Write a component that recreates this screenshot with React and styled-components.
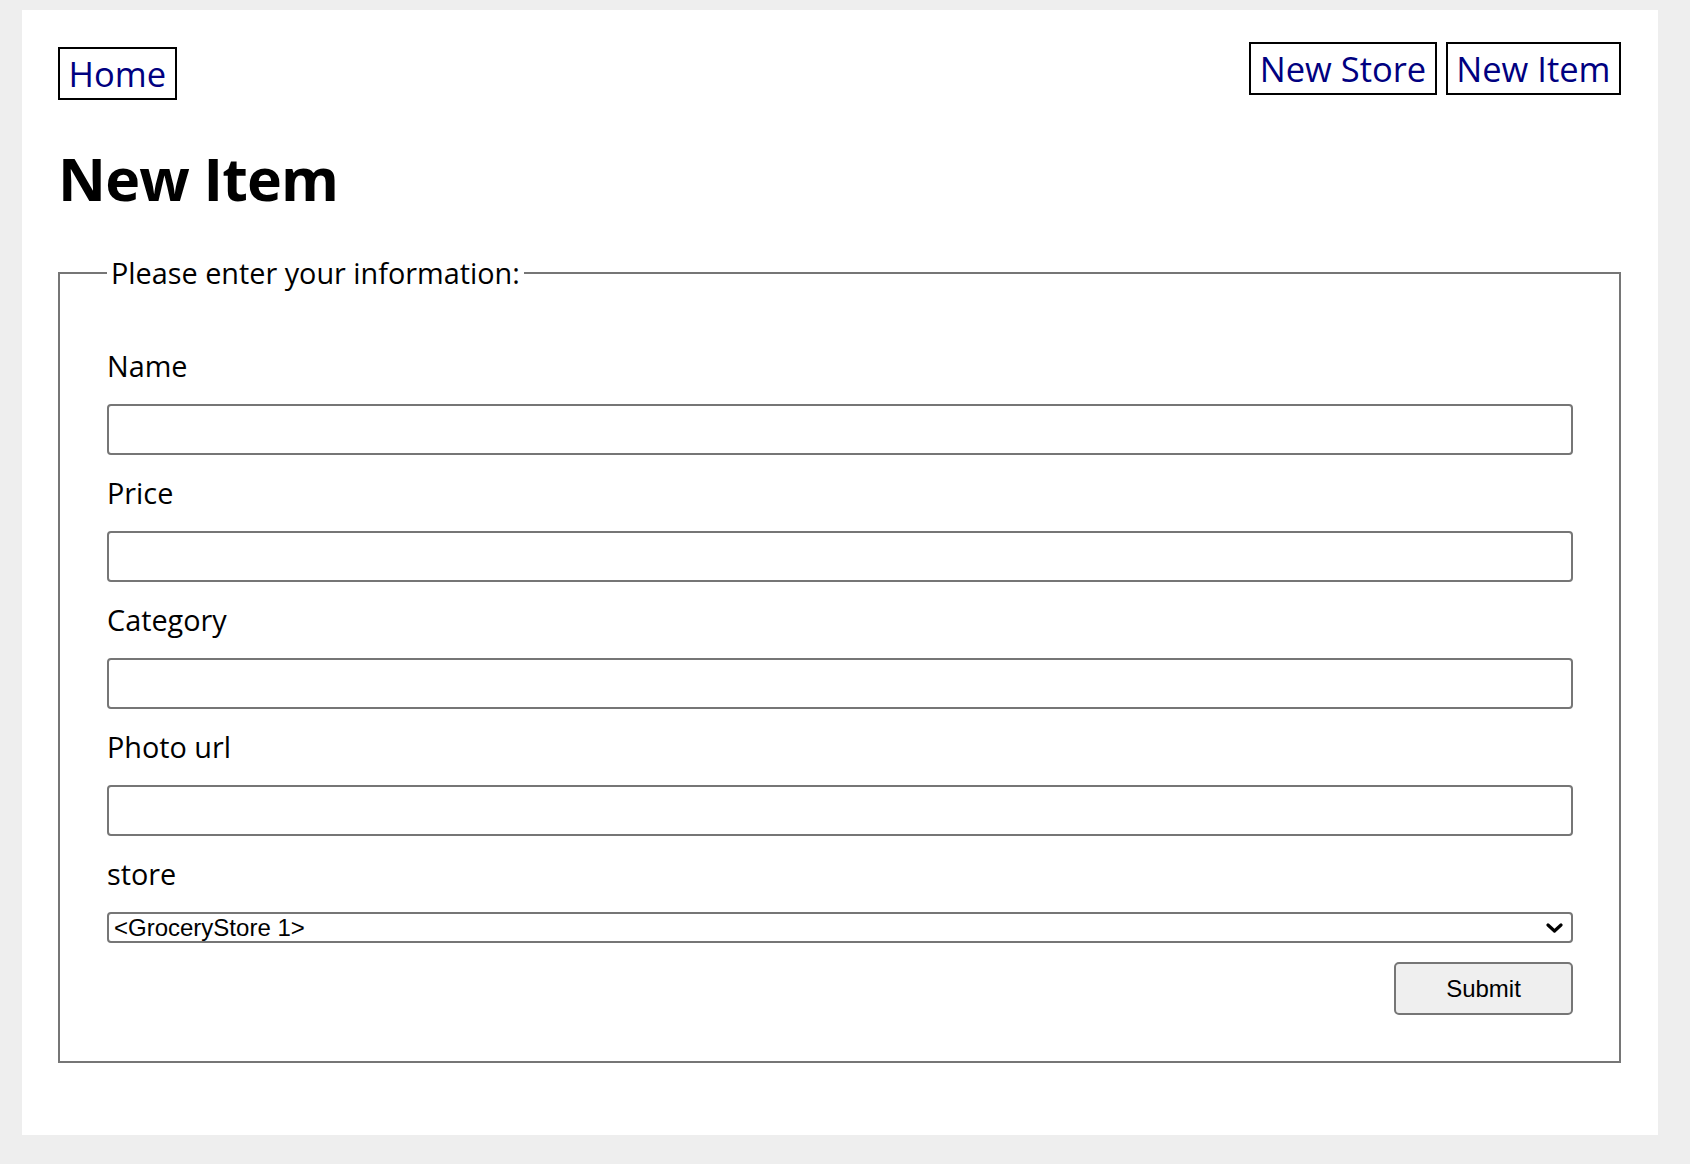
import React from "react";
import styled, { createGlobalStyle } from "styled-components";

const GlobalStyle = createGlobalStyle`
  html, body {
    margin: 0;
    padding: 0;
    background: #eeeeee;
    font-family: "Open Sans", "Noto Sans", sans-serif;
    color: #000;
  }
  * {
    box-sizing: border-box;
  }
`;

const Card = styled.div`
  margin: 10px 32px 29px 22px;
  background: #fff;
  padding: 32px 37px 72px 36px;
`;

const Nav = styled.nav`
  display: flex;
  justify-content: space-between;
  align-items: flex-start;
`;

const NavGroup = styled.div`
  display: flex;
  gap: 9px;
`;

const NavLink = styled.a`
  display: block;
  font-size: 34.5px;
  line-height: 49px;
  color: #000080;
  text-decoration: none;
  border: 2px solid #000;
  padding: 0 8.5px;
  margin-top: ${(props) => (props.$low ? "5px" : "0")};
`;

const Title = styled.h1`
  margin: 35px 0 31px;
  font-size: 59px;
  line-height: 87px;
  font-weight: 700;
  letter-spacing: -0.8px;
`;

const Fieldset = styled.fieldset`
  margin: 0;
  border: 2px solid #767676;
  padding: 53px 46px 46px 47px;
  min-width: 0;
`;

const Legend = styled.legend`
  padding: 0 4px;
  font-size: 28.8px;
  line-height: 40px;
`;

const Label = styled.label`
  display: block;
  font-size: 28.8px;
  line-height: 40px;
  margin-bottom: 18px;
`;

const Input = styled.input`
  display: block;
  width: 100%;
  height: 51px;
  margin: 0 0 18px;
  border: 2px solid #767676;
  border-radius: 4px;
  background: #fff;
  font-size: 24px;
  font-family: "Liberation Sans", Arial, sans-serif;
  padding: 0 6px;
`;

const SelectWrap = styled.div`
  position: relative;
  width: 100%;
`;

const Select = styled.select`
  display: block;
  width: 100%;
  height: 31px;
  appearance: none;
  -webkit-appearance: none;
  border: 2px solid #767676;
  border-radius: 4px;
  background: #fff;
  color: #000;
  font-family: "Liberation Sans", Arial, sans-serif;
  font-size: 24px;
  line-height: 27px;
  padding: 0 30px 0 5px;
`;

const Chevron = styled.svg`
  position: absolute;
  right: 10px;
  top: 10.5px;
  width: 17px;
  height: 10px;
  pointer-events: none;
`;

const Actions = styled.div`
  display: flex;
  justify-content: flex-end;
  margin-top: 19px;
`;

const Submit = styled.button`
  width: 179px;
  height: 53px;
  border: 2px solid #767676;
  border-radius: 5px;
  background: #efefef;
  color: #000;
  font-family: "Liberation Sans", Arial, sans-serif;
  font-size: 24px;
  padding: 0;
`;

const fields = ["Name", "Price", "Category", "Photo url"];

export default function App() {
  return (
    <>
      <GlobalStyle />
      <Card>
        <Nav>
          <NavLink href="#" $low>
            Home
          </NavLink>
          <NavGroup>
            <NavLink href="#">New Store</NavLink>
            <NavLink href="#">New Item</NavLink>
          </NavGroup>
        </Nav>
        <Title>New Item</Title>
        <form onSubmit={(e) => e.preventDefault()}>
          <Fieldset>
            <Legend>Please enter your information:</Legend>
            {fields.map((f) => (
              <React.Fragment key={f}>
                <Label htmlFor={f}>{f}</Label>
                <Input id={f} type="text" />
              </React.Fragment>
            ))}
            <Label htmlFor="store">store</Label>
            <SelectWrap>
              <Select id="store" defaultValue="1">
                <option value="1">&lt;GroceryStore 1&gt;</option>
              </Select>
              <Chevron viewBox="0 0 17 10">
                <path
                  d="M2 2 L8.5 8 L15 2"
                  fill="none"
                  stroke="#000"
                  strokeWidth="3.2"
                  strokeLinecap="round"
                  strokeLinejoin="round"
                />
              </Chevron>
            </SelectWrap>
            <Actions>
              <Submit type="submit">Submit</Submit>
            </Actions>
          </Fieldset>
        </form>
      </Card>
    </>
  );
}
